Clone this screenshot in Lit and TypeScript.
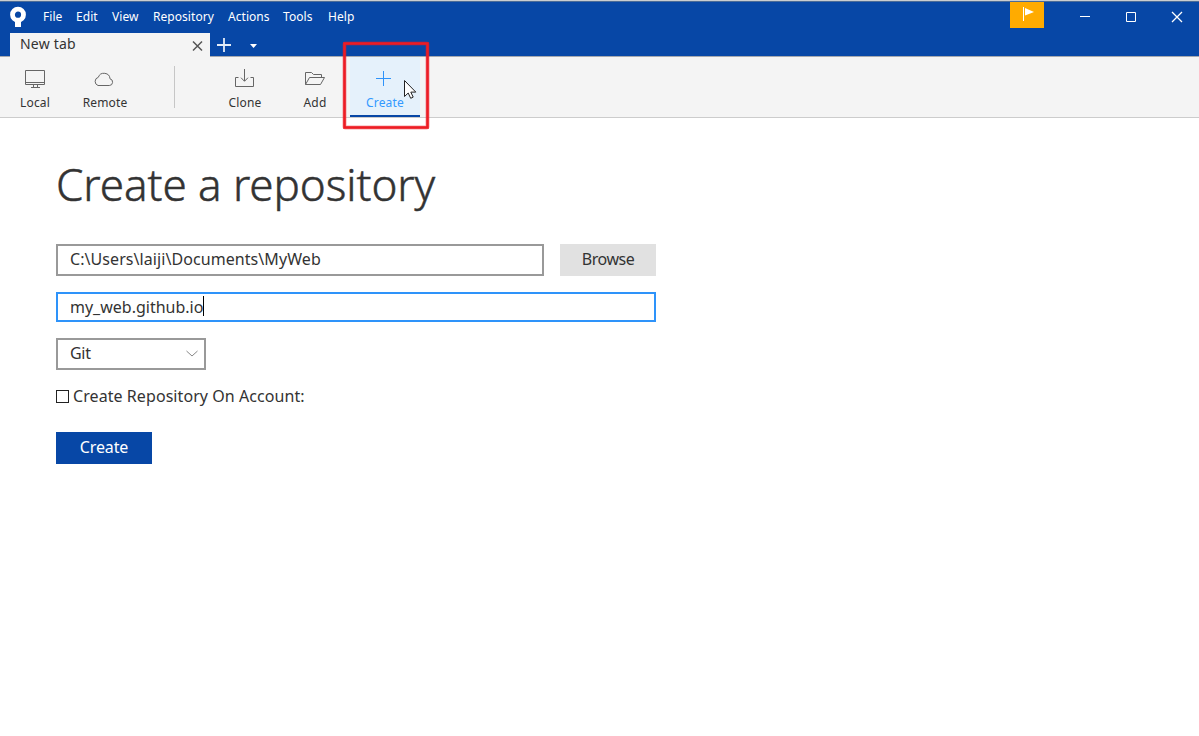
import { LitElement, html, css, svg } from "lit";
import { customElement } from "lit/decorators.js";

const icons: Record<string, unknown> = {
  Local: svg`<path d="M1.500 1.500h19v14h-19zM1.500 13.500h19M9.500 15.500v3M13.500 15.500v3M7 18.500h9"/>`,
  Remote: svg`<path d="M4 16.500h11.300a3.400 3.400 0 0 0 .7-6.700A6 5.800 0 0 0 4.300 8.300A4.300 4.300 0 0 0 4 16.500z"/>`,
  Clone: svg`<path d="M4.500 8.500h-3v9h18v-9h-3M10.500 0v12M7 8.700l3.500 3.600l3.500-3.600"/>`,
  Add: svg`<path d="M1.500 15.500v-12h6l2 2h8v3M1.500 15.500l4-7h15l-4 7z"/>`,
  Create: svg`<path d="M9.500 2v15M2 9.500h15"/>`,
};

@customElement("tool-item")
export class ToolItem extends LitElement {
  static properties = { name: {}, active: { type: Boolean, reflect: true } };
  declare name: string;
  declare active: boolean;
  static styles = css`
    :host { display: flex; flex-direction: column; align-items: center; width: 70px; height: 60px; box-sizing: border-box; padding-top: 12px; color: #333; font-size: 12px; line-height: 18px; }
    :host([active]) { background: #e5f1fb; color: #3399ff; border-bottom: 2px solid #0747a6; }
    svg { width: 22px; height: 22px; fill: none; stroke: #666; stroke-width: 1; flex: none; }
    :host([active]) svg { stroke: #2e93fa; }
    span { margin-top: 3px; letter-spacing: 0.15px; }
  `;
  render() {
    return html`<svg viewBox="0 0 22 22">${icons[this.name]}</svg><span>${this.name}</span>`;
  }
}

@customElement("app-root")
export class AppRoot extends LitElement {
  static styles = css`
    :host { display: block; position: relative; width: 1199px; height: 736px; overflow: hidden; background: #fff; color: #333; font-family: "Noto Sans", "Open Sans", sans-serif; box-sizing: border-box; }
    * { box-sizing: border-box; }
    svg { display: block; fill: none; }
    .header { height: 57px; background: #0747a6; border-top: 1px solid #c9cdd0; border-bottom: 1px solid #a5a9b0; display: flex; flex-direction: column; }
    .titlebar { height: 32px; display: flex; border-top: 1px solid #4b6c97; flex: none; }
    .logo { margin: 4px 0 0 9px; width: 18px; height: 22px; }
    .menu { display: flex; gap: 14px; margin: 6px 0 0 16px; color: #fff; font-size: 12px; line-height: 17px; letter-spacing: 0.05px; }
    .flag { margin-left: auto; width: 34px; height: 26px; background: #ffab00; }
    .window { display: flex; margin: 0 -1px 0 18px; }
    .window svg { width: 46px; height: 30px; stroke: #fff; }
    .tabs { display: flex; height: 24px; }
    .tab { width: 200px; height: 24px; margin-left: 10px; background: #f4f4f4; display: flex; justify-content: space-between; padding-left: 10px; font-size: 14px; line-height: 22px; letter-spacing: 0.2px; }
    .toolbar { height: 61px; background: #f4f4f4; border-bottom: 1px solid #ccc; display: flex; }
    .rule { width: 1px; height: 42px; margin: 9px 35px 0 34px; background: #c6c6c6; }
    .content { padding: 33px 0 0 56px; width: 656px; display: flex; flex-direction: column; align-items: flex-start; font-size: 16px; line-height: 24px; letter-spacing: 0.07px; }
    h1 { font-size: 44px; font-weight: 300; line-height: 67px; margin: 0 0 26px; white-space: nowrap; letter-spacing: -0.06px; -webkit-text-stroke: 0.5px #333; }
    .row { display: flex; gap: 16px; }
    .field { height: 32px; border: 2px solid #999; padding: 1px 12px; display: flex; }
    .path { width: 488px; }
    .name { width: 600px; height: 30px; border-color: #2e93fa; margin-top: 16px; letter-spacing: 0; }
    .caret { width: 1px; height: 20px; margin-top: 1px; background: #000; }
    .button { width: 96px; height: 32px; line-height: 31px; text-align: center; background: #e1e1e1; letter-spacing: -0.6px; }
    .button { letter-spacing: -0.5px; }
    .primary { background: #0747a6; color: #fff; margin-top: 24px; letter-spacing: -0.1px; }
    .select { width: 150px; margin-top: 16px; justify-content: space-between; padding-right: 5px; letter-spacing: -0.3px; }
    .account { display: flex; margin-top: 14px; gap: 4px; }
    .box { width: 13px; height: 13px; border: 1px solid #222; margin-top: 6px; }
    .text { display: block; white-space: nowrap; }
    .highlight { position: absolute; left: 342px; top: 41px; width: 88px; height: 89px; pointer-events: none; }
    .cursor { position: absolute; left: 403px; top: 79px; width: 15px; height: 21px; }
    .t-file { width: 19px; } .t-edit { width: 22px; } .t-view { width: 27px; } .t-repository { width: 61px; } .t-actions { width: 41px; } .t-tools { width: 31px; } .t-help { width: 27px; }
  `;
  render() {
    return html`
      <div class="header">
        <div class="titlebar">
          <svg class="logo" viewBox="0 0 18 22"><path d="M6 13h6v8H6z" fill="#fff"/><circle cx="9" cy="8.700" r="5.500" stroke="#fff" stroke-width="4.800"/></svg>
          <div class="menu">${["File", "Edit", "View", "Repository", "Actions", "Tools", "Help"].map((m) => html`<span class="text t-${m.toLowerCase()}">${m}</span>`)}</div>
          <div class="flag"><svg width="34" height="26"><path d="M13.500 5v14" stroke="#fff"/><path d="M15 6l9 4l-9 3.500z" fill="#fff"/></svg></div>
          <div class="window">
            <svg viewBox="0 0 46 30"><path d="M18 14.500h10"/></svg>
            <svg viewBox="0 0 46 30"><path d="M18.500 10.500h9v9h-9z"/></svg>
            <svg viewBox="0 0 46 30"><path d="M18 10l10 10M28 10l-10 10" stroke-width="1.300"/></svg>
          </div>
        </div>
        <div class="tabs">
          <div class="tab"><span class="text">New tab</span><svg width="20" height="24"><path d="M3 8.500l9 9M12 8.500l-9 9" stroke="#555" stroke-width="1.500"/></svg></div>
          <svg width="60" height="23"><path d="M14 5v14M7 12h14" stroke="#e4ecf7" stroke-width="1.800"/><path d="M40 11h7l-3.500 4z" fill="#fff"/></svg>
        </div>
      </div>
      <div class="toolbar">
        <tool-item name="Local"></tool-item><tool-item name="Remote"></tool-item>
        <div class="rule"></div>
        <tool-item name="Clone"></tool-item><tool-item name="Add"></tool-item><tool-item name="Create" active></tool-item>
      </div>
      <div class="content">
        <h1>Create a repository</h1>
        <div class="row"><div class="field path"><span class="text">C:\\Users\\laiji\\Documents\\MyWeb</span></div><div class="button">Browse</div></div>
        <div class="field name"><span class="text">my_web.github.io</span><i class="caret"></i></div>
        <div class="field select"><span class="text">Git</span><svg width="14" height="26"><path d="M1.500 10l5.500 5l5.500-5" stroke="#888"/></svg></div>
        <div class="account"><i class="box"></i><span class="text">Create Repository On Account:</span></div>
        <div class="button primary">Create</div>
      </div>
      <svg class="highlight" viewBox="0 0 88 89"><rect x="2.500" y="2.500" width="83" height="84" rx="1" stroke="#ed1c24" stroke-opacity=".4" stroke-width="4"/><rect x="2.500" y="2.500" width="83" height="84" stroke="#ed1c24" stroke-width="2.600"/></svg>
      <svg class="cursor" viewBox="0 0 15 21"><path d="M1.500 1.500v16l3.700-3.500l2.500 5.300l2.500-1.200l-2.400-5h5z" fill="#fff" stroke="#222"/></svg>
    `;
  }
}
